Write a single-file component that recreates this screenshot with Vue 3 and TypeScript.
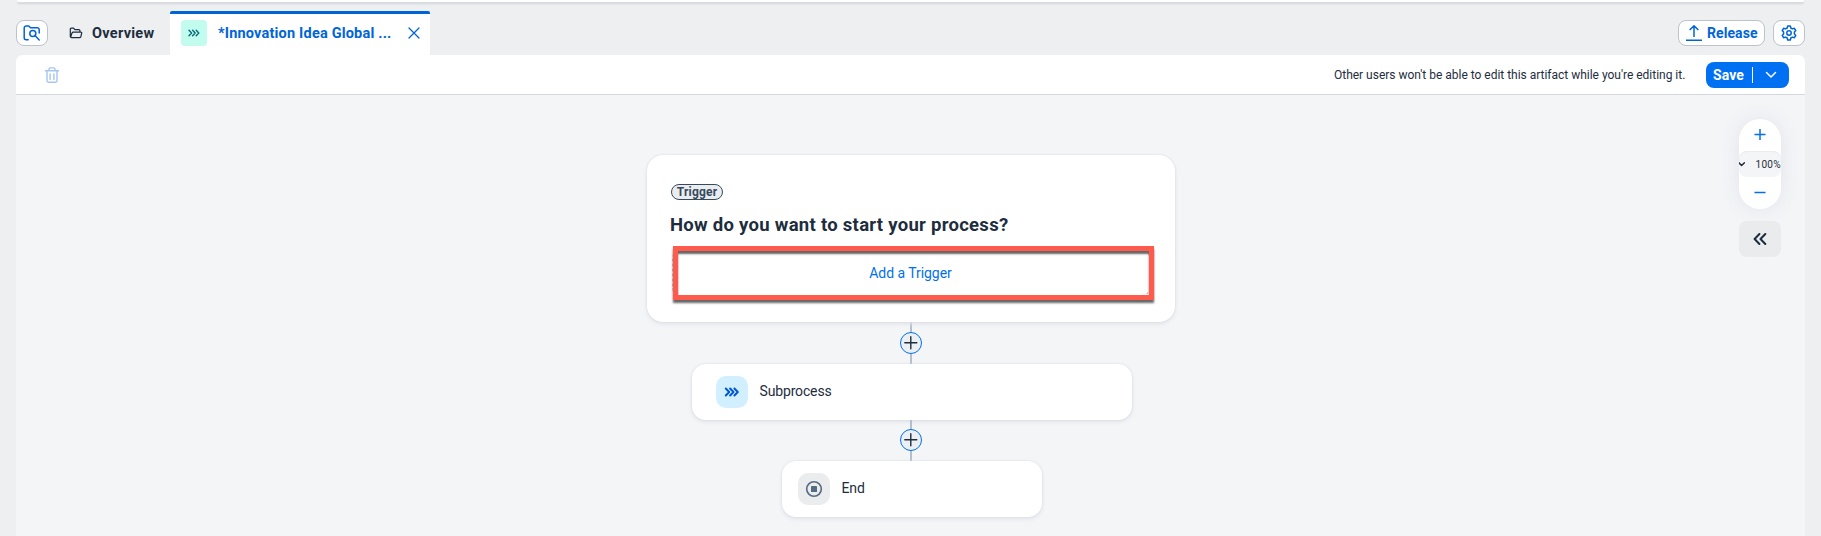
<script setup lang="ts">
import { ref } from 'vue'

interface FlowNode {
  id: string
  label: string
  kind: 'subprocess' | 'end'
}

const zoomLevel = ref<number>(100)
const nodes: FlowNode[] = [
  { id: 'sub', label: 'Subprocess', kind: 'subprocess' },
  { id: 'end', label: 'End', kind: 'end' },
]
</script>

<template>
  <div class="page">
    <div class="shell"></div>
    <header class="tabs">
      <button class="btn explorer" aria-label="Explorer">
        <svg width="18" height="18" viewBox="0 0 18 18">
          <path d="M5.2 15.7H3.2a2 2 0 0 1-2-2V3.9a2 2 0 0 1 2-2h2.6l1.7 1.8h6.7a2 2 0 0 1 2 2v3.2" />
          <circle cx="9.8" cy="9.4" r="3" />
          <path d="M12 11.6l4.2 4.3" />
        </svg>
      </button>
      <div class="tab overview">
        <svg width="14" height="12" viewBox="0 0 14 12">
          <path d="M1.3 9.6V2.2q0-1 1-1h2.3l1.3 1.4h4q1 0 1 1V5M1.6 10.2l1.3-4q.4-1.1 1.4-1.1h7.5q1.1 0 .9 1l-.8 3.4q-.3 1.1-1.4 1.1H2.4q-.9 0-1.1-1" />
        </svg>
        <span class="overview-text">Overview</span>
      </div>
      <div class="tab active">
        <span class="badge">
          <svg width="12" height="8" viewBox="0 0 12 8">
            <path d="M1 1.2L3.6 4L1 6.8M4.6 1.2L7.2 4L4.6 6.8M8.2 1.2L10.8 4L8.2 6.8" />
          </svg>
        </span>
        <span class="active-text">*Innovation Idea Global ...</span>
        <svg class="close" width="12" height="12" viewBox="0 0 12 12"><path d="M1 1l10 10M11 1L1 11" /></svg>
      </div>
      <div class="spacer"></div>
      <button class="btn release">
        <svg width="16" height="16" viewBox="0 0 16 16">
          <path d="M0 15.2h16M8 12V1M3.6 5L8 .9L12.4 5" />
        </svg>
        <span class="release-text">Release</span>
      </button>
      <button class="btn settings" aria-label="Settings">
        <svg width="16" height="16" viewBox="0 0 16 16">
          <path d="M6.7 1h2.6l.5 2 1.6.9 2-.6 1.4 2.3L13.4 7.1v1.8l1.4 1.5-1.4 2.3-2-.6-1.6.9-.5 2H6.7l-.5-2-1.6-.9-2 .6-1.4-2.3 1.4-1.5V7.1L1.2 5.6l1.4-2.3 2 .6L6.2 3z" />
          <circle cx="8" cy="8" r="2.2" />
        </svg>
      </button>
    </header>

    <main class="panel">
      <div class="toolbar">
        <svg class="trash" width="14" height="16" viewBox="0 0 14 16">
          <path d="M0 3.7h14M2 4v9.6q0 1.6 1.6 1.6h6.8q1.6 0 1.6-1.6V4M4 3.5V2.2Q4 .9 5.3.9h3.4Q10 .9 10 2.2v1.3M5.1 7v5.5M8.9 7v5.5" />
        </svg>
        <span class="lock-note">Other users won't be able to edit this artifact while you're editing it.</span>
        <button class="save">
          <span class="save-text">Save</span>
          <span class="divider"></span>
          <svg width="12" height="8" viewBox="0 0 12 8"><path d="M1.5 1.5L6 6L10.5 1.5" /></svg>
        </button>
      </div>

      <div class="canvas">
        <div class="flow">
          <section class="trigger-card">
            <span class="pill"><span>Trigger</span></span>
            <h1><span>How do you want to start your process?</span></h1>
            <div class="slot"><button class="add"><span>Add a Trigger</span></button></div>
          </section>
          <template v-for="node in nodes" :key="node.id">
            <div class="connector" :class="node.kind">
              <button class="plus" aria-label="Add step">
                <svg width="14" height="14" viewBox="0 0 14 14"><path d="M.8 6.8h12M6.8.8v12" /></svg>
              </button>
            </div>
            <section class="node" :class="node.kind">
              <span class="node-icon">
                <svg v-if="node.kind === 'subprocess'" width="16" height="10" viewBox="0 0 16 10">
                  <path d="M1.8 1.5L5.2 5L1.8 8.5M6.1 1.5L9.5 5L6.1 8.5M10.4 1.5L13.8 5L10.4 8.5" />
                </svg>
                <svg v-else width="18" height="18" viewBox="0 0 18 18">
                  <circle cx="9" cy="9" r="7.3" />
                  <rect x="6" y="6" width="6" height="6" rx=".6" />
                </svg>
              </span>
              <span class="node-label">{{ node.label }}</span>
            </section>
          </template>
        </div>

        <aside class="tools">
          <div class="zoom">
            <button aria-label="Zoom in"><svg width="12" height="12" viewBox="0 0 12 12"><path d="M.5 5.5h11M6 0v11" /></svg></button>
            <div class="level">
              <svg width="6" height="5" viewBox="0 0 6 5"><path d="M0 .8L2.6 3.5L5.4.8" /></svg>
              <span>{{ zoomLevel }}%</span>
            </div>
            <button aria-label="Zoom out"><svg width="12" height="12" viewBox="0 0 12 12"><path d="M.5 5.5h11" /></svg></button>
          </div>
          <button class="collapse" aria-label="Expand panel">
            <svg width="14" height="12" viewBox="0 0 14 12"><path d="M6.4 1L1.6 6l4.8 5M12.3 1L7.5 6l4.8 5" /></svg>
          </button>
        </aside>
      </div>
    </main>
  </div>
</template>

<style>
html,
body {
  margin: 0;
  background: #eeeff1;
}
</style>

<style scoped>
* { box-sizing: border-box; }
.page {
  display: flex;
  flex-direction: column;
  width: 1821px;
  height: 536px;
  padding: 0 16px;
  overflow: hidden;
  background: #eeeff1;
  color: #1d2d3e;
  font-family: Roboto, "Liberation Sans", sans-serif;
  white-space: nowrap;
}
button { margin: 0; padding: 0; border: 0; background: none; font: inherit; color: inherit; letter-spacing: inherit; }
svg { display: block; flex: none; fill: none; stroke: currentColor; stroke-width: 1.5; stroke-linecap: round; stroke-linejoin: round; }
.shell {
  flex: none;
  height: 2px;
  margin: 0 1px;
  background: #fff;
  border-radius: 0 0 10px 10px;
  box-shadow: 0 2px 2px #cfd3d8;
}
.tabs { display: flex; flex: none; height: 53px; padding-top: 9px; }
.btn {
  display: flex;
  align-items: center;
  height: 26px;
  margin-top: 9px;
  border: 1px solid #bcc3ca;
  border-radius: 8px;
  background: #fff;
  color: #0064d9;
}
.explorer, .settings { width: 32px; justify-content: center; }
.tab { display: flex; align-items: center; font-size: 14.5px; font-weight: 700; }
.overview { width: 122px; padding: 0 0 0 21px; letter-spacing: 0.28px; }
.overview svg { margin-right: 9px; stroke-width: 1.2; }
.active {
  width: 260px;
  height: 44px;
  padding: 0 0 1px 11px;
  border-top: 3px solid #0064d9;
  border-radius: 2px 2px 0 0;
  background: #fff;
  color: #0064d9;
}
.badge {
  display: flex;
  align-items: center;
  justify-content: center;
  width: 26px;
  height: 26px;
  margin: -3px 11px 0 0;
  border-radius: 4px;
  background: #c2fcee;
  color: #046c7a;
}
.badge svg { stroke-width: 1.4; }
.active-text { width: 190px; margin-top: -1px; letter-spacing: 0.19px; }
.close { margin-top: -3px; stroke-width: 1.3; }
.spacer { flex: 1; }
.release { width: 87px; margin-right: 8px; padding-left: 7px; font-size: 14px; font-weight: 700; letter-spacing: 0.08px; }
.release svg { margin-right: 5px; stroke-linecap: butt; }
.panel {
  flex: 1;
  display: flex;
  flex-direction: column;
  overflow: hidden;
  border-radius: 7px 7px 0 0;
  background: #f4f5f7;
}
.toolbar {
  display: flex;
  align-items: center;
  flex: none;
  height: 40px;
  padding: 0 16px 0 29px;
  border-bottom: 1px solid #d5d7da;
  background: #fff;
}
.trash { color: #a6c5f2; stroke-width: 1.4; }
.lock-note { width: 372px; margin-left: auto; font-size: 12px; letter-spacing: -0.015px; }
.save {
  display: flex;
  align-items: center;
  width: 83px;
  height: 26px;
  padding-left: 7px;
  border-radius: 8px;
  background: #0070f2;
  color: #fff;
  font-size: 14px;
  font-weight: 700;
}
.save-text { width: 39px; padding-top: 1px; text-align: left; letter-spacing: 0.1px; }
.divider { width: 1px; height: 16px; background: #fff; }
.save svg { margin-left: 12px; }
.canvas { display: flex; justify-content: space-between; flex: 1; padding-right: 24px; }
.flow { display: flex; flex-direction: column; align-items: center; width: 530px; margin: 60px 0 0 631px; }
.trigger-card {
  isolation: isolate;
  flex: none;
  width: 528px;
  height: 167px;
  margin-right: 2px;
  padding: 29px 21px 0 24px;
  border-radius: 16px;
  background: #fff;
  box-shadow: 0 0 2px #d5dae1, 0 2px 4px #dfe3e8;
}
.pill {
  display: flex;
  align-items: center;
  justify-content: center;
  width: 52px;
  height: 16px;
  border: 1px solid #354a5f;
  border-radius: 8px;
  background: #eaecee;
  color: #354a5f;
  font-size: 12px;
  font-weight: 700;
  line-height: 14px;
  letter-spacing: 0.2px;
}
h1 { height: 46px; margin: 0 0 0 -1px; padding-top: 11px; font-size: 18.5px; line-height: 28px; font-weight: 700; letter-spacing: 0.28px; }
.slot {
  position: relative;
  width: 481px;
  height: 54px;
  margin-left: 2px;
  border: 5px solid #ff5a4c;
  box-shadow: 0 3px 2px #666, inset 0 3px 2px #666;
}
.slot::before {
  content: "";
  position: absolute;
  z-index: -1;
  inset: -1px -1px -1px -6px;
  border: 1px dashed #b4bdc6;
  border-radius: 8px;
}
.add { width: 100%; height: 44px; color: #0070f2; font-size: 14px; padding-right: 6px; letter-spacing: -0.05px; }
.connector {
  display: flex;
  align-items: center;
  justify-content: center;
  flex: none;
  width: 22px;
  height: 42px;
  margin-right: 2px;
  background: linear-gradient(#b3bfcc, #b3bfcc) center / 2px 100% no-repeat;
}
.connector.end { height: 41px; align-items: flex-start; padding-top: 9px; }
.plus {
  display: flex;
  align-items: center;
  justify-content: center;
  width: 22px;
  height: 22px;
  border: 1px solid #0070f2;
  border-radius: 50%;
  background: #edf0f3;
  color: #1d2d3e;
}
.plus svg { stroke-width: 1.4; }
.node {
  display: flex;
  align-items: center;
  flex: none;
  height: 56px;
  border-radius: 14px;
  background: #fff;
  box-shadow: 0 0 2px #d5dae1, 0 2px 4px #dfe3e8;
  font-size: 14px;
  letter-spacing: -0.15px;
}
.node-label { margin-top: -2px; }
.node.subprocess { width: 440px; padding-left: 24px; }
.node.end { width: 260px; padding-left: 16px; }
.node-icon {
  display: flex;
  align-items: center;
  justify-content: center;
  width: 32px;
  height: 32px;
  margin-right: 11.5px;
  border-radius: 10px;
}
.subprocess .node-icon { background: #d1efff; color: #0057d2; }
.subprocess .node-icon svg { stroke-width: 2; margin-right: 1px; }
.end .node-icon { background: #eaecee; color: #556b82; }
.end .node-icon svg { stroke-width: 1.6; margin-right: 1px; }
.end rect { fill: currentColor; stroke: none; }
.tools { width: 42px; margin-top: 24px; }
.zoom {
  height: 90px;
  overflow: hidden;
  border-radius: 21px;
  background: #fff;
  color: #0070f2;
  box-shadow: 0 0 20px #e0e4ea;
}
.zoom button { display: flex; align-items: center; justify-content: center; width: 42px; height: 32px; }
.zoom button svg { stroke-linecap: butt; }
.level {
  display: flex;
  align-items: center;
  height: 26px;
  border-radius: 8px;
  background: #f4f5f6;
  box-shadow: inset 0 1px 1px #e8eaed;
  color: #1d2d3e;
  font-size: 10px;
  letter-spacing: 0.3px;
}
.level span { margin-left: 10.5px; }
.collapse {
  display: flex;
  align-items: center;
  justify-content: center;
  width: 42px;
  height: 36px;
  margin-top: 12px;
  border-radius: 8px;
  background: #e9ebed;
}
.collapse svg { stroke-width: 2; }
</style>
